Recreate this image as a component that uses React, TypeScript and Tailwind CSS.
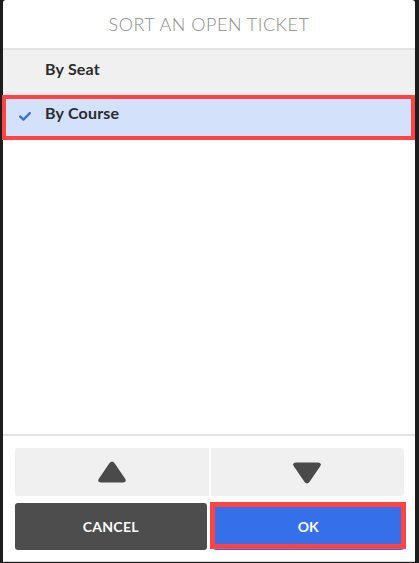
import React from 'react';

const Check = () => (
    <svg width="12" height="9" viewBox="0 0 12 9" className="text-[#3b72e6]">
        <path d="M1.2 4.6 L4.4 7.6 L10.8 1.2" fill="none" stroke="currentColor" strokeWidth="2.4" strokeLinecap="round" strokeLinejoin="round" />
    </svg>
);

const Triangle = ({ down }: { down?: boolean }) => (
    <svg width="30" height="23" viewBox="0 0 30 23" className={down ? 'rotate-180' : ''}>
        <path d="M12.4 2.2 Q15 -1 17.6 2.2 L28.2 17.8 Q30 21.5 26 21.5 L4 21.5 Q0 21.5 1.8 17.8 Z" fill="#4a4a4a" />
    </svg>
);

export default function App() {
    return (
        <div className="w-[419px] h-[563px] bg-[#1d1d1d] flex pl-[3px] pr-[4px]" style={{ fontFamily: 'Lato, "Open Sans", sans-serif' }}>
            <div className="flex-1 bg-white rounded-t-[3px] flex flex-col border-b border-[#d4d4d4] h-[562px]">
                {/* Header */}
                <div className="h-[50px] flex items-center justify-center border-b-2 border-[#e3e3e3] shrink-0">
                    <span className="text-[18px] font-light text-[#8c8c8c] tracking-[0.5px]">SORT AN OPEN TICKET</span>
                </div>

                {/* Options */}
                <div className="flex-1 flex flex-col">
                    <div className="h-[45px] bg-[#f0f0f0] flex items-start pl-[42px] pt-[7px]">
                        <span className="text-[16px] font-bold text-[#2b2b2b] tracking-[0.2px]">By Seat</span>
                    </div>
                    <div className="h-[45px] bg-[#d3e1fa] relative flex items-start pt-[6px]">
                        <div className="w-[42px] flex justify-center pt-[11px] pl-[1px]">
                            <Check />
                        </div>
                        <span className="text-[16px] font-bold text-[#2b2b2b] tracking-[0.2px]">By Course</span>
                        <span className="absolute -left-[1px] right-0 top-0 bottom-0 border-4 border-[#ff4343]" />
                    </div>
                </div>

                {/* Footer */}
                <div className="border-t-2 border-[#e3e3e3] px-[12px] pr-[11px] pt-[12px] pb-[11px] flex flex-col gap-[7px] shrink-0">
                    <div className="h-[48px] flex gap-[2px] rounded-[3px] overflow-hidden">
                        <button className="flex-1 bg-[#f0f0f0] flex items-center justify-center">
                            <Triangle />
                        </button>
                        <button className="flex-1 bg-[#f0f0f0] flex items-center justify-center">
                            <Triangle down />
                        </button>
                    </div>
                    <div className="h-[47px] flex gap-[6px]">
                        <button className="flex-1 bg-[#4d4d4d] rounded-[3px] text-white text-[14px] font-bold tracking-[0.3px]">
                            CANCEL
                        </button>
                        <button className="flex-1 bg-[#356fe9] rounded-[3px] text-white text-[14px] font-bold relative">
                            OK
                            <span className="absolute -left-[3px] -right-[2px] -top-[1px] bottom-[1px] border-[5px] border-[#ff4343]" />
                        </button>
                    </div>
                </div>
            </div>
        </div>
    );
}
